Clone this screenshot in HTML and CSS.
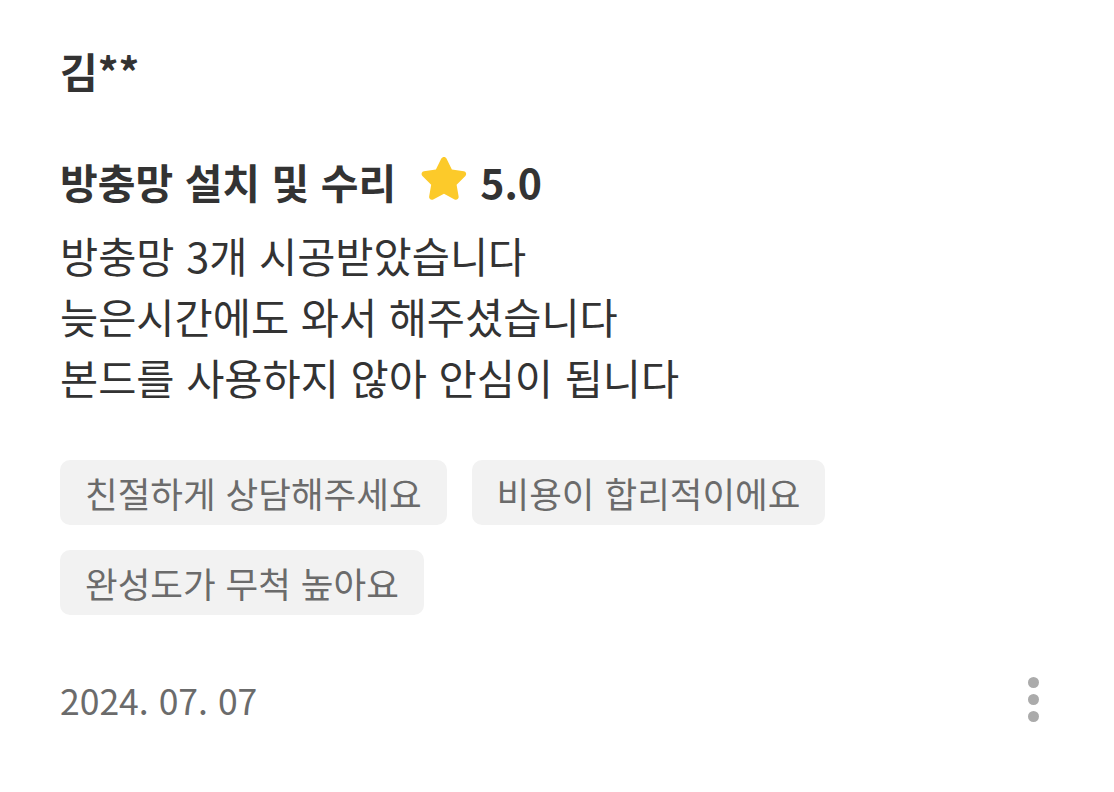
FILE: index.html
```html
<!DOCTYPE html>
<html lang="ko">
<head>
    <meta charset="UTF-8">
    <meta name="viewport" content="width=device-width, initial-scale=1.0">
    <title>리뷰</title>
    <link rel="stylesheet" href="styles.css">
</head>
<body>
<div class="review">
    <div class="author">김**</div>
    <div class="title-row">
        <span class="service">방충망 설치 및 수리</span>
        <svg class="star" viewBox="0 0 24 24" width="56" height="54">
            <path d="M12 2.2c.5 0 .9.3 1.1.7l2.4 4.9 5.3.8c1 .1 1.4 1.4.7 2.1l-3.9 3.8.9 5.3c.2 1-.9 1.7-1.8 1.3L12 18.6l-4.8 2.5c-.9.5-2-.3-1.8-1.3l.9-5.3-3.9-3.8c-.7-.7-.3-2 .7-2.1l5.3-.8 2.4-4.9c.3-.4.7-.7 1.2-.7z" fill="#fcca2a"/>
        </svg>
        <span class="score">5.0</span>
    </div>
    <div class="body-text">
        <p>방충망 3개 시공받았습니다</p>
        <p>늦은시간에도 와서 해주셨습니다</p>
        <p>본드를 사용하지 않아 안심이 됩니다</p>
    </div>
    <div class="tags">
        <span class="tag">친절하게 상담해주세요</span>
        <span class="tag">비용이 합리적이에요</span>
        <span class="tag">완성도가 무척 높아요</span>
    </div>
    <div class="footer">
        <span class="date">2024. 07. 07</span>
        <button class="more" aria-label="더보기">
            <span class="dot"></span>
            <span class="dot"></span>
            <span class="dot"></span>
        </button>
    </div>
</div>
</body>
</html>
```

FILE: styles.css
```css
* {
    box-sizing: border-box;
    margin: 0;
    padding: 0;
    font-family: "Noto Sans CJK KR", "Noto Sans", sans-serif;
}

body, html {
    height: 100%;
    background-color: #fff;
    overflow: hidden;
}

.review {
    display: flex;
    flex-direction: column;
    padding: 40px 70px 0 60px;
    color: #333;
}

.author {
    font-size: 41px;
    font-weight: bold;
    line-height: 60px;
}

.title-row {
    display: flex;
    align-items: center;
    margin-top: 49px;
    height: 64px;
}

.service {
    font-size: 41px;
    font-weight: bold;
}

.star {
    margin-left: 20px;
    margin-bottom: 4px;
}

.score {
    margin-left: 8px;
    font-size: 41px;
    font-weight: bold;
}

.body-text {
    margin-top: 12px;
    font-size: 41.5px;
    line-height: 61px;
}

.tags {
    display: flex;
    flex-wrap: wrap;
    gap: 25px;
    margin-top: 52px;
    width: 800px;
}

.tag {
    display: inline-flex;
    align-items: center;
    height: 65px;
    padding: 0 25px;
    background-color: #f2f2f2;
    border-radius: 10px;
    font-size: 35.5px;
    color: #6b6b6b;
}

.footer {
    display: flex;
    justify-content: space-between;
    align-items: center;
    margin-top: 59px;
}

.date {
    font-size: 35.5px;
    color: #6b6b6b;
}

.more {
    display: flex;
    flex-direction: column;
    gap: 6px;
    background: none;
    border: none;
    padding: 0 5px;
}

.dot {
    width: 11px;
    height: 11px;
    border-radius: 50%;
    background-color: #ababab;
}
```
